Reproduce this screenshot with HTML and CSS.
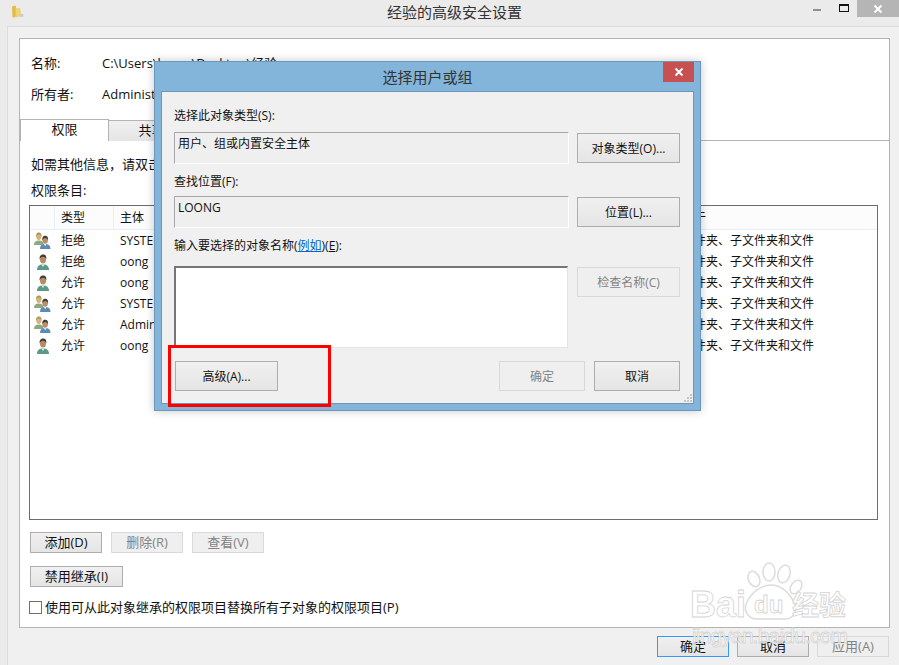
FILE: index.html
```html
<!DOCTYPE html>
<html lang="zh-CN">
<head>
<meta charset="utf-8">
<title>经验的高级安全设置</title>
<link rel="stylesheet" href="styles.css">
</head>
<body>
<svg class="defs" xmlns="http://www.w3.org/2000/svg">
  <symbol id="user" viewBox="0 0 14 16">
    <path d="M1 16c0-3.600 1.800-5.600 6-5.600s6 2 6 5.600z" fill="#5a9a86"/>
    <path d="M5.400 10.400 7 13l1.600-2.600z" fill="#e4efe6"/>
    <ellipse cx="7" cy="5.600" rx="3" ry="4" fill="#b68a62"/>
    <path d="M3.700 5.400C3.200 1.800 5 .4 7 .4s3.900 1.300 3.300 5c-.6-1.700-1.700-2.600-3.300-2.600s-2.700.9-3.300 2.600z" fill="#413e37"/>
  </symbol>
  <symbol id="group" viewBox="0 0 17 17">
    <path d="M0 13c0-3 1.500-4.600 4.800-4.600S9.600 10 9.600 13z" fill="#8fa884"/>
    <ellipse cx="4.800" cy="4.600" rx="2.600" ry="3.400" fill="#d8b27e"/>
    <path d="M2 5C1.700 1.600 3.200.4 4.800.4S8 1.600 7.600 5C7 3.400 6.200 2.600 4.800 2.600S2.600 3.400 2 5z" fill="#a89a55"/>
    <path d="M6 17c0-3.300 1.600-5 5.200-5s5.300 1.700 5.300 5z" fill="#5b8cb6"/>
    <path d="M9.800 12l1.400 2.200 1.400-2.200z" fill="#e3edf5"/>
    <ellipse cx="11.200" cy="8.200" rx="2.700" ry="3.500" fill="#b98f68"/>
    <path d="M8.300 8.400c-.4-3.400 1.200-4.600 2.900-4.600s3.300 1.200 2.900 4.600c-.5-1.500-1.500-2.400-2.900-2.400s-2.400.9-2.900 2.400z" fill="#413e38"/>
  </symbol>
</svg>

<div class="window">
  <header class="titlebar">
    <svg class="folder" viewBox="0 0 13 13" aria-hidden="true">
      <path d="M1 1.500 4 .5l1 1v9.500l-1 1.500-2.600-.2z" fill="#e2bb4e"/>
      <path d="M4.600 3h4.400l1.600 7.800-6 1.700z" fill="#efd377"/>
      <path d="M8.600 9h3.600l.6 2.600-4 .6z" fill="#cfcfbe"/>
    </svg>
    <h1 class="window-title">经验的高级安全设置</h1>
    <div class="controls">
      <span class="ctl"><i class="ctl-min"></i></span>
      <span class="ctl"><i class="ctl-max"></i></span>
      <span class="ctl ctl-close">
        <svg width="10" height="10" viewBox="0 0 10 10"><path d="M1.500 1.500l7 7M8.500 1.500l-7 7" stroke="#fff" stroke-width="2"/></svg>
      </span>
    </div>
  </header>

  <main class="window-body">
    <section class="panel">
      <div class="info">
        <div class="info-row"><span class="info-key">名称:</span><span>C:\Users\loong\Desktop\经验</span></div>
        <div class="info-row"><span class="info-key">所有者:</span><span>Administrators (LOONG\Administrators)</span></div>
      </div>
      <div class="tabs">
        <span class="tab tab-active">权限</span>
        <span class="tab">共享</span>
        <span class="tab">审核</span>
        <span class="tab">有效访问</span>
      </div>
      <p class="hint">如需其他信息，请双击权限项目。若要修改权限项目，请选择该项目并单击“编辑”。</p>
      <p class="list-label">权限条目:</p>
      <div class="list">
        <div class="list-row list-head">
          <span></span><span>类型</span><span>主体</span><span>访问</span><span>继承于</span><span>应用于</span>
        </div>
        <div class="list-row"><span class="cell-ico"><svg class="ico-g"><use href="#group"/></svg></span><span>拒绝</span><span>SYSTEM</span><span>完全控制</span><span>无</span><span>此文件夹、子文件夹和文件</span></div>
        <div class="list-row"><span class="cell-ico"><svg class="ico-u"><use href="#user"/></svg></span><span>拒绝</span><span>oong</span><span>完全控制</span><span>无</span><span>此文件夹、子文件夹和文件</span></div>
        <div class="list-row"><span class="cell-ico"><svg class="ico-u"><use href="#user"/></svg></span><span>允许</span><span>oong</span><span>完全控制</span><span>无</span><span>此文件夹、子文件夹和文件</span></div>
        <div class="list-row"><span class="cell-ico"><svg class="ico-g"><use href="#group"/></svg></span><span>允许</span><span>SYSTEM</span><span>完全控制</span><span>无</span><span>此文件夹、子文件夹和文件</span></div>
        <div class="list-row"><span class="cell-ico"><svg class="ico-g"><use href="#group"/></svg></span><span>允许</span><span>Administrators</span><span>完全控制</span><span>无</span><span>此文件夹、子文件夹和文件</span></div>
        <div class="list-row"><span class="cell-ico"><svg class="ico-u"><use href="#user"/></svg></span><span>允许</span><span>oong</span><span>完全控制</span><span>无</span><span>此文件夹、子文件夹和文件</span></div>
      </div>
      <div class="list-actions">
        <button class="btn btn-main">添加(D)</button>
        <button class="btn btn-main" disabled>删除(R)</button>
        <button class="btn btn-main" disabled>查看(V)</button>
      </div>
      <button class="btn btn-inherit">禁用继承(I)</button>
      <label class="check-row"><span class="checkbox"></span><span class="check-text">使用可从此对象继承的权限项目替换所有子对象的权限项目(P)</span></label>
    </section>
    <footer class="footer">
      <button class="btn btn-main btn-focus">确定</button>
      <button class="btn btn-main">取消</button>
      <button class="btn btn-main" disabled>应用(A)</button>
    </footer>
  </main>
</div>

<section class="dialog">
  <header class="dialog-bar">
    <h2 class="dialog-title">选择用户或组</h2>
    <span class="dialog-close">
      <svg width="10" height="10" viewBox="0 0 10 10"><path d="M1.500 1.500l7 7M8.500 1.500l-7 7" stroke="#fff" stroke-width="2"/></svg>
    </span>
  </header>
  <div class="dialog-body">
    <p class="d-label">选择此对象类型(S):</p>
    <div class="d-row">
      <div class="d-field">用户、组或内置安全主体</div>
      <button class="btn btn-d">对象类型(O)...</button>
    </div>
    <p class="d-label d-label-2">查找位置(F):</p>
    <div class="d-row">
      <div class="d-field">LOONG</div>
      <button class="btn btn-d">位置(L)...</button>
    </div>
    <p class="d-label d-label-3">输入要选择的对象名称(<a class="d-link">例如</a>)(<u>E</u>):</p>
    <div class="d-row d-row-top">
      <div class="d-input"></div>
      <button class="btn btn-d" disabled>检查名称(C)</button>
    </div>
    <div class="d-actions">
      <button class="btn btn-d">高级(A)...</button>
      <div class="d-actions-right">
        <button class="btn btn-d2" disabled>确定</button>
        <button class="btn btn-d2">取消</button>
      </div>
    </div>
    <svg class="grip" width="10" height="10" viewBox="0 0 10 10"><path d="M7 1h2v2H7zM4 4h2v2H4zM7 4h2v2H7zM1 7h2v2H1zM4 7h2v2H4zM7 7h2v2H7z" fill="#c4c4c4"/></svg>
  </div>
</section>

<div class="annotation"></div>

<svg class="watermark" width="170" height="95" viewBox="0 0 170 95" aria-hidden="true">
  <g class="wm-shape">
    <ellipse cx="69" cy="21" rx="5.500" ry="8" transform="rotate(-25 69 21)"/>
    <ellipse cx="84" cy="14" rx="6" ry="9"/>
    <ellipse cx="99" cy="16" rx="6" ry="9" transform="rotate(15 99 16)"/>
    <ellipse cx="111" cy="29" rx="5" ry="7.500" transform="rotate(35 111 29)"/>
    <path d="M62 44c4-9 14-17 24-17s18 8 23 17c4 6 1 17-9 17H72c-10 0-14-10-10-17z"/>
  </g>
  <text class="wm-big" x="5" y="59">Bai</text>
  <text class="wm-du" x="69" y="55">du</text>
  <text class="wm-cn" x="107" y="57">经验</text>
  <text class="wm-url" x="7" y="85" textLength="156">jingyan.baidu.com</text>
</svg>
```

FILE: styles.css
```css
* { box-sizing: border-box; }

html, body {
  margin: 0;
  padding: 0;
}

body {
  position: relative;
  width: 899px;
  height: 665px;
  overflow: hidden;
  background: #ebebeb;
  color: #111;
  font-family: "Open Sans", "Noto Sans CJK SC", sans-serif;
  font-size: 13px;
  line-height: 16px;
}

.defs { display: none; }

p, h1, h2 { margin: 0; font-weight: 400; }

.window {
  display: flex;
  flex-direction: column;
  height: 665px;
}

/* Title bar */
.titlebar {
  display: grid;
  grid-template-columns: 1fr auto 1fr;
  align-items: start;
  height: 26px;
  padding-left: 10px;
}

.folder {
  width: 13px;
  height: 13px;
  margin: 5px 0 0 1px;
}

.window-title {
  margin-top: 3px;
  font-size: 15px;
  line-height: 18px;
  color: #333;
}

.controls {
  display: flex;
  justify-content: flex-end;
}

.ctl {
  display: flex;
  align-items: center;
  justify-content: center;
  width: 27px;
  height: 17px;
}

.ctl-min {
  display: block;
  width: 8px;
  height: 2px;
  margin-top: 3px;
  background: #8f8f8f;
}

.ctl-max {
  display: block;
  width: 10px;
  height: 8px;
  margin-top: -1px;
  border: 1px solid #111;
  border-top-width: 2px;
}

.ctl-close {
  width: 42px;
  background: #b5b5b5;
}

/* Window body */
.window-body {
  flex: 1;
  margin-left: 7px;
  padding: 11px 9px 0 11px;
  background: #f0f0f0;
  border-top: 1px solid #dcdcdc;
  border-left: 1px solid #dcdcdc;
}

.panel {
  height: 590px;
  background: #fff;
  border: 1px solid #b4b4b4;
}

.info {
  display: flex;
  flex-direction: column;
  gap: 15px;
  padding: 16px 0 17px 11px;
}

.info-row {
  display: flex;
  white-space: nowrap;
}

.info-key { width: 71px; }

.tabs {
  display: flex;
  height: 22px;
  border-bottom: 1px solid #b4b4b4;
}

.tab {
  display: flex;
  align-items: center;
  justify-content: center;
  width: 86px;
  height: 21px;
  margin-top: 1px;
  padding-bottom: 2px;
  background: linear-gradient(#f0f0f0, #e5e5e5);
  border: 1px solid #b4b4b4;
  border-bottom: 0;
  border-left: 0;
}

.tab-active {
  width: 89px;
  height: 22px;
  margin-top: 0;
  padding-bottom: 3px;
  background: #fff;
  border-left: 1px solid #b4b4b4;
}

.hint {
  margin: 15px 0 0 11px;
  white-space: nowrap;
}

.list-label { margin: 10px 0 7px 11px; }

.list {
  width: 849px;
  height: 315px;
  margin-left: 9px;
  overflow: hidden;
  background: #fff;
  border: 1px solid #6d6d6d;
  font-size: 12px;
}

.list-row {
  display: grid;
  grid-template-columns: 25px 59px 250px 150px 150px 1fr;
  align-items: center;
  height: 21px;
  white-space: nowrap;
}

.list-row > span {
  height: 100%;
  padding-left: 6px;
  overflow: hidden;
  line-height: 21px;
}

.list-head {
  height: 24px;
  background: #fcfcfc;
  border-bottom: 1px solid #e6eff8;
}

.list-head > span {
  line-height: 23px;
  border-right: 1px solid #e6eff8;
}

.list-head > span:last-child { border-right: 0; }

.list-row > .cell-ico {
  display: flex;
  align-items: center;
  padding-left: 4px;
}

.ico-g { width: 17px; height: 17px; }
.ico-u { width: 14px; height: 16px; margin-left: 2px; }

.list-actions {
  display: flex;
  gap: 9px;
  margin: 12px 0 0 10px;
}

.btn {
  display: flex;
  align-items: center;
  justify-content: center;
  padding: 0;
  color: #111;
  font: inherit;
  background: linear-gradient(#f0f0f0, #e5e5e5);
  border: 1px solid #adadad;
  border-radius: 0;
  white-space: nowrap;
}

.btn:disabled {
  color: #838383;
  background: #efefef;
  border-color: #d9d9d9;
}

.btn-main {
  width: 72px;
  height: 21px;
  padding-bottom: 2px;
}

.btn-inherit {
  width: 93px;
  height: 21px;
  margin: 13px 0 0 10px;
  padding-bottom: 2px;
}

.check-row {
  display: flex;
  align-items: center;
  height: 13px;
  margin: 14px 0 0 9px;
  white-space: nowrap;
}

.check-text { margin-top: -2px; }

.checkbox {
  width: 13px;
  height: 13px;
  margin-right: 3px;
  background: #fff;
  border: 1px solid #707070;
}

.footer {
  display: flex;
  justify-content: flex-end;
  gap: 8px;
  margin-top: 8px;
  padding-right: 1px;
}

.btn-focus { border-color: #3399ff; }

/* Dialog window */
.dialog {
  position: absolute;
  left: 154px;
  top: 61px;
  display: flex;
  flex-direction: column;
  width: 547px;
  height: 350px;
  background: #83b5db;
  border: 1px solid #6a97bb;
  box-shadow: 0 0 9px rgba(0, 0, 0, .22);
  font-size: 12px;
}

.dialog-bar {
  position: relative;
  height: 29px;
  flex: none;
}

.dialog-title {
  padding-top: 6px;
  text-align: center;
  font-size: 15px;
  line-height: 18px;
  color: #333;
}

.dialog-close {
  position: absolute;
  top: 0;
  right: 6px;
  display: flex;
  align-items: center;
  justify-content: center;
  width: 31px;
  height: 20px;
  background: #c75050;
}

.dialog-body {
  position: relative;
  flex: 1;
  margin: 0 6px 6px 6px;
  padding: 16px 13px 0 12px;
  background: #f0f0f0;
  border: 1px solid #6a97bb;
}

.d-label { height: 16px; margin-bottom: 8px; }
.d-label-2 { margin-bottom: 6px; }
.d-label-3 { margin-bottom: 12px; }

.d-link {
  color: #0066cc;
  text-decoration: underline;
}

.d-row {
  display: grid;
  grid-template-columns: 395px 103px;
  gap: 8px;
  align-items: center;
  height: 32px;
  margin-bottom: 10px;
}

.d-row-top {
  align-items: start;
  height: 82px;
  margin-bottom: 13px;
}

.d-field {
  height: 32px;
  padding: 3px 3px 0;
  background: #efefef;
  border: 1px solid #fff;
  border-top-color: #a8a8a8;
  border-left-color: #a8a8a8;
}

.d-input {
  width: 394px;
  height: 82px;
  background: #fff;
  border: 1px solid #e4e4e4;
  border-top: 2px solid #767676;
  border-left: 2px solid #767676;
}

.btn-d { width: 103px; height: 30px; padding-top: 1px; }
.d-row-top .btn-d { margin-top: 1px; }
.btn-d2 { width: 86px; height: 30px; padding-top: 1px; }

.d-actions {
  display: flex;
  justify-content: space-between;
  padding-left: 1px;
}

.d-actions-right {
  display: flex;
  gap: 9px;
}

.grip {
  position: absolute;
  right: 0;
  bottom: 0;
}

/* Overlays */
.annotation {
  position: absolute;
  left: 168px;
  top: 345px;
  width: 163px;
  height: 62px;
  border: 3px solid #f00;
}

.watermark {
  position: absolute;
  left: 685px;
  top: 558px;
  overflow: visible;
}

.wm-shape {
  fill: rgba(255, 255, 255, .65);
  stroke: #dcdcdc;
  stroke-width: 1.500;
}

.wm-big, .wm-du, .wm-cn, .wm-url {
  fill: rgba(255, 255, 255, .7);
  stroke: #d4d4d4;
  stroke-width: .8;
  font-family: "Liberation Sans", sans-serif;
  font-weight: 700;
}

.wm-big { font-size: 36px; }
.wm-du { font-size: 24px; }
.wm-cn { font-size: 27px; font-family: "Noto Sans CJK SC", sans-serif; }
.wm-url { font-size: 21px; font-weight: 400; }
```
